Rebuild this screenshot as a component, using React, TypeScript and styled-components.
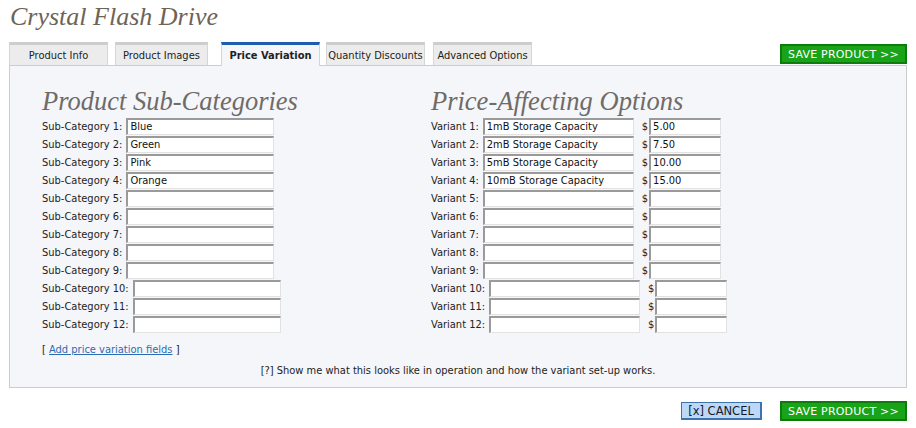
import React from "react";
import styled, { createGlobalStyle } from "styled-components";

const Global = createGlobalStyle`
  html, body { margin: 0; padding: 0; background: #ffffff; }
  body {
    font-family: "DejaVu Sans Condensed", "DejaVu Sans", Verdana, sans-serif;
    font-stretch: semi-condensed;
    font-size: 11px;
    color: #222;
  }
`;

const Page = styled.div`
  width: 916px;
  padding: 0 9px;
  box-sizing: border-box;
`;

const Title = styled.h1`
  margin: 0;
  padding: 4px 0 0 1px;
  height: 38px;
  box-sizing: border-box;
  font-family: "Liberation Serif", "DejaVu Serif", serif;
  font-style: italic;
  font-weight: normal;
  font-size: 26px;
  line-height: 26px;
  color: #6e6357;
`;

const TabBar = styled.div`
  display: flex;
  align-items: flex-end;
  height: 27px;
`;

const Tab = styled.div<{ $active?: boolean; $w: number; $ml: number }>`
  width: ${(p) => p.$w}px;
  margin-left: ${(p) => p.$ml}px;
  height: ${(p) => (p.$active ? 24 : 23)}px;
  box-sizing: border-box;
  display: flex;
  align-items: center;
  justify-content: center;
  background: ${(p) => (p.$active ? "#f5f6fa" : "#ececec")};
  border-top: ${(p) => (p.$active ? "3px solid #1c5ead" : "3px solid #cdcdcd")};
  border-left: 1px solid #d6d6d6;
  border-right: 1px solid #d6d6d6;
  font-weight: ${(p) => (p.$active ? "bold" : "normal")};
  color: #222;
  margin-bottom: ${(p) => (p.$active ? "-1px" : "0")};
  position: relative;
  z-index: ${(p) => (p.$active ? 1 : 0)};
`;

const Spacer = styled.div`
  flex: 1;
`;

const SaveButton = styled.button`
  width: 127px;
  height: 20px;
  box-sizing: border-box;
  background: #18a318;
  border: 2px solid #0d7c0d;
  color: #ffffff;
  font-family: "DejaVu Sans", Verdana, sans-serif;
  font-stretch: normal;
  font-size: 11px;
  letter-spacing: 0.2px;
  padding: 0;
  cursor: pointer;
`;

const TopSave = styled(SaveButton)`
  margin-bottom: 1px;
`;

const Panel = styled.div`
  border: 1px solid #cccccc;
  background: #f5f6fa;
  height: 323px;
  box-sizing: border-box;
  padding-top: 21px;
`;

const Columns = styled.div`
  display: grid;
  grid-template-columns: 389px 1fr;
  padding-left: 32px;
`;

const Column = styled.div`
  display: flex;
  flex-direction: column;
`;

const Heading = styled.h2`
  margin: 0 0 2px 0;
  height: 28px;
  font-family: "Liberation Serif", "DejaVu Serif", serif;
  font-style: italic;
  font-weight: normal;
  font-size: 26.5px;
  line-height: 29px;
  color: #6f6b68;
`;

const Row = styled.div`
  display: flex;
  align-items: center;
  height: 18px;
`;

const Label = styled.span`
  margin-right: 4px;
  white-space: nowrap;
`;

const Field = styled.input<{ $w: number }>`
  width: ${(p) => p.$w}px;
  height: 17px;
  box-sizing: border-box;
  background: #ffffff;
  border-top: 2px solid #9a9a9a;
  border-left: 2px solid #9a9a9a;
  border-right: 1px solid #e2e2e2;
  border-bottom: 1px solid #e2e2e2;
  padding: 0 2px;
  margin: 0;
  font-family: "DejaVu Sans Condensed", "DejaVu Sans", Verdana, sans-serif;
  font-stretch: semi-condensed;
  font-size: 11px;
  color: #111;
  outline: none;
`;

const Dollar = styled.span`
  margin-left: 8px;
  margin-right: 1px;
`;

const AddLine = styled.div`
  padding-left: 32px;
  margin-top: 10px;
  height: 14px;
  color: #222;
`;

const Link = styled.a`
  color: #2b6cb4;
  text-decoration: underline;
`;

const Help = styled.div`
  text-align: center;
  margin-top: 7px;
  color: #222;
`;

const BottomBar = styled.div`
  display: flex;
  justify-content: flex-end;
  align-items: center;
  gap: 18px;
  padding-top: 13px;
`;

const CancelButton = styled.button`
  width: 81px;
  height: 18px;
  box-sizing: border-box;
  background: #bcd8f6;
  border: 1px solid #3f73ad;
  border-right-width: 2px;
  border-bottom-width: 2px;
  color: #151a2a;
  font-family: "DejaVu Sans", Verdana, sans-serif;
  font-size: 11.5px;
  padding: 0;
  cursor: pointer;
`;

const subs = ["Blue", "Green", "Pink", "Orange", "", "", "", "", "", "", "", ""];
const variants = [
  ["1mB Storage Capacity", "5.00"],
  ["2mB Storage Capacity", "7.50"],
  ["5mB Storage Capacity", "10.00"],
  ["10mB Storage Capacity", "15.00"],
  ["", ""],
  ["", ""],
  ["", ""],
  ["", ""],
  ["", ""],
  ["", ""],
  ["", ""],
  ["", ""],
];

const tabs = [
  { label: "Product Info", w: 99, ml: 0 },
  { label: "Product Images", w: 93, ml: 7 },
  { label: "Price Variation", w: 99, ml: 13, active: true },
  { label: "Quantity Discounts", w: 99, ml: 6 },
  { label: "Advanced Options", w: 99, ml: 8 },
];

export default function App() {
  return (
    <Page>
      <Global />
      <Title>Crystal Flash Drive</Title>
      <TabBar>
        {tabs.map((t) => (
          <Tab key={t.label} $w={t.w} $ml={t.ml} $active={t.active}>
            {t.label}
          </Tab>
        ))}
        <Spacer />
        <TopSave>SAVE PRODUCT &gt;&gt;</TopSave>
      </TabBar>
      <Panel>
        <Columns>
          <Column>
            <Heading>Product Sub-Categories</Heading>
            {subs.map((v, i) => (
              <Row key={i}>
                <Label>Sub-Category {i + 1}:</Label>
                <Field $w={148} defaultValue={v} />
              </Row>
            ))}
          </Column>
          <Column>
            <Heading>Price-Affecting Options</Heading>
            {variants.map(([name, price], i) => (
              <Row key={i}>
                <Label>Variant {i + 1}:</Label>
                <Field $w={151} defaultValue={name} />
                <Dollar>$</Dollar>
                <Field $w={72} defaultValue={price} />
              </Row>
            ))}
          </Column>
        </Columns>
        <AddLine>
          [ <Link href="#">Add price variation fields</Link> ]
        </AddLine>
        <Help>[?] Show me what this looks like in operation and how the variant set-up works.</Help>
      </Panel>
      <BottomBar>
        <CancelButton>[x] CANCEL</CancelButton>
        <SaveButton>SAVE PRODUCT &gt;&gt;</SaveButton>
      </BottomBar>
    </Page>
  );
}
